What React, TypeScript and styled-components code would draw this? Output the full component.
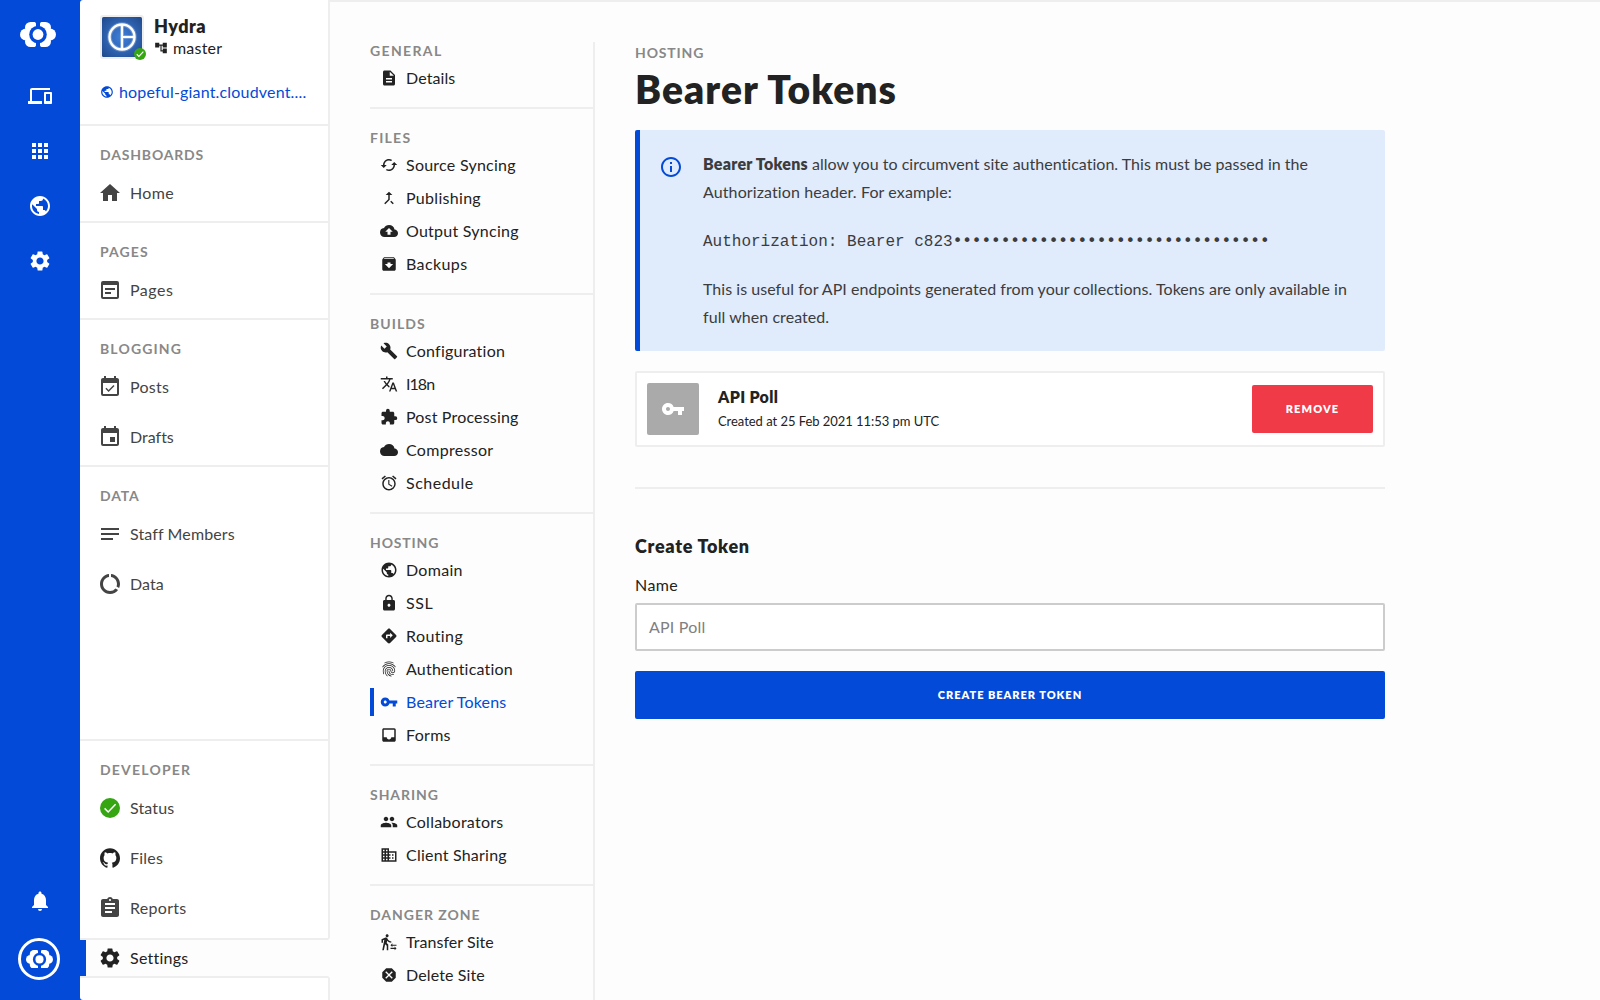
import React from "react";
import styled, { createGlobalStyle } from "styled-components";
import {
  MdDevices, MdApps, MdPublic, MdSettings, MdNotifications, MdHome, MdEventAvailable, MdEvent, MdNotes,
  MdDataUsage, MdAssignment, MdWysiwyg, MdDescription, MdCached, MdCallMerge, MdCloudUpload, MdArchive,
  MdBuild, MdTranslate, MdExtension, MdCloud, MdAccessAlarm, MdLock, MdDirections, MdFingerprint, MdVpnKey,
  MdInbox, MdPeople, MdBusiness, MdTransferWithinAStation, MdDangerous, MdAccountTree, MdInfoOutline,
} from "react-icons/md";
import { SiGithub } from "react-icons/si";

const blue = "#034ad8";
const line = "#eeeeee";

const Global = createGlobalStyle`
  * { box-sizing: border-box; }
  body {
    margin: 0;
    background: #fdfdfd;
    color: #222;
    font: 16px/24px Lato, "Open Sans", sans-serif;
    font-variant-ligatures: none;
  }
  svg { display: block; flex: none; }
`;

const Fit = styled.span<{ $s?: number }>`
  letter-spacing: ${(p) => p.$s ?? 0}px;
  white-space: nowrap;
`;

const Shell = styled.div`
  display: flex;
  height: 1000px;
  overflow: hidden;
  background: ${blue};
`;
const Rail = styled.nav`
  width: 80px;
  flex: none;
  color: #fff;
  display: flex;
  flex-direction: column;
  align-items: center;
  padding: 22px 0 20px;
`;
const RailLogo = styled.div`
  margin: 0 4px 21px 0;
`;
const RailItem = styled.div`
  height: 55px;
  display: grid;
  place-items: center;
`;
const RailFoot = styled.div`
  margin-top: auto;
  display: flex;
  flex-direction: column;
  align-items: center;
  gap: 25px;
`;
const Account = styled.div`
  width: 42px;
  height: 42px;
  border: 3px solid #fff;
  border-radius: 50%;
  display: grid;
  place-items: center;
  margin-right: 2px;
`;

const Side = styled.aside`
  width: 250px;
  flex: none;
  background: #fff;
  border-radius: 3px 0 0 3px;
  display: flex;
  flex-direction: column;
  color: #444;
`;
const SideHead = styled.div`
  height: 126px;
  padding: 15px 20px 0;
  border-right: 2px solid ${line};
  border-bottom: 2px solid ${line};
  color: #222;
`;
const SiteRow = styled.div`
  display: flex;
  gap: 10px;
`;
const Avatar = styled.div`
  position: relative;
  width: 44px;
  height: 44px;
  padding: 2px;
  background: #eee;
  border-radius: 3px;
`;
const AvatarBadge = styled.div`
  position: absolute;
  right: -2px;
  bottom: -1px;
`;
const SiteName = styled.div`
  font-size: 18px;
  font-weight: 800;
  line-height: 22px;
`;
const Branch = styled.div`
  display: flex;
  align-items: center;
  gap: 5px;
  line-height: 22px;
`;
const SiteLink = styled.div`
  display: flex;
  align-items: center;
  gap: 5px;
  margin-top: 21px;
  color: ${blue};
`;
const SideGroup = styled.section<{ $fill?: boolean }>`
  border-right: 2px solid ${line};
  border-bottom: 2px solid ${line};
  padding: 17px 20px 3px;
  flex: ${(p) => (p.$fill ? "1" : "none")};
`;
const DevGroup = styled(SideGroup)`
  padding-bottom: 5px;
  border-bottom-right-radius: 3px;
`;
const Heading = styled.div`
  font-size: 14px;
  font-weight: 700;
  line-height: 24px;
  color: #888;
`;
const SideItem = styled.div`
  display: flex;
  align-items: center;
  gap: 10px;
  height: 50px;
`;
const SideItems = styled.div`
  margin: 1px 0 0;
`;
const SideActive = styled.div`
  height: 36px;
  flex: none;
  background: #fdfdfd;
  border-left: 6px solid ${blue};
  padding-left: 14px;
  display: flex;
  align-items: center;
  gap: 10px;
  color: #222;
`;
const SideTail = styled.div`
  height: 24px;
  flex: none;
  border: 2px solid ${line};
  border-left: 0;
  border-bottom: 0;
  border-top-right-radius: 3px;
`;

const Page = styled.main`
  flex: 1;
  background: #fdfdfd;
  border-top: 2px solid ${line};
  display: flex;
  padding: 40px 0 0 40px;
`;
const Sub = styled.nav`
  width: 225px;
  flex: none;
  border-right: 2px solid ${line};
`;
const SubGroup = styled.section`
  border-bottom: 2px solid ${line};
  padding-bottom: 15px;
  margin-bottom: 20px;
`;
const SubHeading = styled(Heading)`
  line-height: 18px;
`;
const SubItem = styled.div<{ $on?: boolean }>`
  display: flex;
  align-items: center;
  gap: 8px;
  height: 28px;
  padding-left: ${(p) => (p.$on ? 6 : 10)}px;
  border-left: ${(p) => (p.$on ? `4px solid ${blue}` : "0")};
  color: ${(p) => (p.$on ? blue : "#222")};
`;

const SubItems = styled.div`
  display: flex;
  flex-direction: column;
  gap: 5px;
  margin-top: 4px;
`;

const Content = styled.div`
  width: 750px;
  margin-left: 40px;
`;
const Crumb = styled(Heading)`
  line-height: 22px;
`;
const Title = styled.h1`
  margin: 0;
  font-size: 39px;
  font-weight: 800;
  line-height: 51px;
`;
const Notice = styled.div`
  display: flex;
  gap: 20px;
  height: 221px;
  margin-top: 15px;
  padding: 20px 20px 0 19px;
  border-left: 5px solid ${blue};
  border-radius: 2px;
  background: #e0ebfc;
  color: #3c3c3c;
  line-height: 28px;
  & > svg { margin-top: 5px; color: ${blue}; }
`;
const Para = styled.p`
  margin: 0 0 21px;
  b { font-weight: 800; }
`;
const Code = styled.p`
  margin: 22px 0 19px;
  font: 16px/28px "Liberation Mono", monospace;
  white-space: nowrap;
`;
const Mask = styled.span`
  font-family: "DejaVu Sans Mono", monospace;
  letter-spacing: -0.03px;
  line-height: 1;
`;
const Card = styled.div`
  display: flex;
  align-items: center;
  height: 76px;
  margin-top: 20px;
  padding: 0 10px;
  border: 2px solid ${line};
  border-radius: 2px;
  background: #fff;
`;
const KeyTile = styled.div`
  width: 52px;
  height: 52px;
  border-radius: 2px;
  background: #aaa;
  color: #fff;
  display: grid;
  place-items: center;
`;
const CardText = styled.div`
  margin: 0 0 1px 19px;
  flex: 1;
`;
const CardName = styled.div`
  font-weight: 800;
  line-height: 24px;
`;
const CardMeta = styled.div`
  font-size: 13px;
  line-height: 24px;
`;
const Button = styled.button<{ $danger?: boolean }>`
  width: ${(p) => (p.$danger ? "121px" : "100%")};
  height: 48px;
  border: 0;
  border-radius: 2px;
  background: ${(p) => (p.$danger ? "#f03a47" : blue)};
  color: #fff;
  font: 800 11px/24px Lato, sans-serif;
  padding: 0;
`;
const Rule = styled.hr`
  height: 2px;
  margin: 40px 0 43px;
  border: 0;
  background: ${line};
`;
const FormTitle = styled.h2`
  margin: 0;
  font-size: 18px;
  font-weight: 800;
  line-height: 28px;
`;
const Label = styled.label`
  display: block;
  margin-top: 12px;
  line-height: 26px;
`;
const Input = styled.div`
  height: 48px;
  margin: 5px 0 20px;
  padding: 0 12px;
  border: 2px solid #ccc;
  border-radius: 2px;
  background: #fff;
  color: #808080;
  line-height: 43px;
`;

const Logo = ({ w }: { w: number }) => (
  <svg width={w} height={(w * 25) / 36} viewBox="0 0 36 25">
    <g fill="#fff">
      <circle cx="10.5" cy="5.5" r="5.5" /><circle cx="6" cy="12.5" r="6" /><circle cx="10.5" cy="19.5" r="5.5" />
      <circle cx="25.5" cy="5.5" r="5.5" /><circle cx="30" cy="12.5" r="6" /><circle cx="25.5" cy="19.5" r="5.5" />
      <rect x="8" y="5" width="20" height="15" />
      <path d="M10.5 0H14.6Q15.6 .2 16 1.4V23.6Q15.6 24.8 14.6 25H10.5zM25.5 0H21.4Q20.4 .2 20 1.4V23.6Q20.4 24.8 21.4 25H25.5z" />
    </g>
    <circle cx="18" cy="12.5" r="8.8" fill={blue} />
    <path d="M16.2 0h3.6v25h-3.6z" fill={blue} />
    <circle cx="18" cy="12.5" r="5.4" fill="#fff" />
  </svg>
);

const Check = ({ size }: { size: number }) => (
  <svg width={size} height={size} viewBox="0 0 20 20">
    <circle cx="10" cy="10" r="10" fill="#35a512" />
    <path
      d="M4.6 10.4l3.6 3.6L15.6 6.2"
      fill="none"
      stroke="#fff"
      strokeWidth={size < 16 ? 1.9 : 1.5}
    />
  </svg>
);

const SiteIcon = () => (
  <svg width="40" height="40" viewBox="0 0 40 40">
    <defs>
      <radialGradient id="site" r="0.7">
        <stop offset="0" stopColor="#3f80dc" />
        <stop offset="1" stopColor="#20488a" />
      </radialGradient>
    </defs>
    <rect width="40" height="40" rx="1.5" fill="url(#site)" />
    <g fill="none" stroke="#fff">
      <path d="M20 7.5v25M20 20h12.5" strokeWidth="4" opacity="0.25" />
      <circle cx="20" cy="20" r="12.5" strokeWidth="4.5" opacity="0.25" />
      <circle cx="20" cy="20" r="12.5" strokeWidth="2.4" />
      <path d="M20 7.5v25M20 20h12.5" strokeWidth="2.2" />
    </g>
  </svg>
);

type Item = [React.ReactNode, string, number];
const side: [string, number, Item[]][] = [
  ["DASHBOARDS", 0.83, [[<MdHome />, "Home", 0.35]]],
  ["PAGES", 1.1, [[<MdWysiwyg />, "Pages", 0.5]]],
  ["BLOGGING", 1.15, [[<MdEventAvailable />, "Posts", 0.3], [<MdEvent />, "Drafts", 0]]],
  ["DATA", 0.8, [[<MdNotes />, "Staff Members", 0.12], [<MdDataUsage />, "Data", 0.1]]],
];
const sub: [string, number, Item[]][] = [
  ["GENERAL", 1.35, [[<MdDescription />, "Details", 0.1]]],
  ["FILES", 1.25, [[<MdCached />, "Source Syncing", 0.25], [<MdCallMerge />, "Publishing", 0.3], [<MdCloudUpload />, "Output Syncing", 0.25], [<MdArchive />, "Backups", 0.4]]],
  ["BUILDS", 1.05, [[<MdBuild />, "Configuration", 0.22], [<MdTranslate />, "I18n", -0.95]
    , [<MdExtension />, "Post Processing", 0.17], [<MdCloud />, "Compressor", 0.3], [<MdAccessAlarm />, "Schedule", 0.5]]],
  ["HOSTING", 0.85, [[<MdPublic />, "Domain", 0.3], [<MdLock />, "SSL", 0.6], [<MdDirections />, "Routing", 0.4], [<MdFingerprint />, "Authentication", 0.2], [<MdVpnKey />, "Bearer Tokens", 0.17], [<MdInbox />, "Forms", 0.3]]],
  ["SHARING", 0.95, [[<MdPeople />, "Collaborators", 0.25], [<MdBusiness />, "Client Sharing", 0.22]]],
  ["DANGER ZONE", 0.97, [[<MdTransferWithinAStation />, "Transfer Site", 0.05], [<MdDangerous />, "Delete Site", 0.12]]],
];
const IconBox = styled.span<{ $w: number }>`
  width: ${(p) => p.$w}px;
  display: flex;
  justify-content: center;
  flex: none;
  font-size: ${(p) => (p.$w === 20 ? 24 : 18)}px;
`;

export default function App() {
  return (
    <>
      <Global />
      <Shell>
        <Rail>
          <RailLogo><Logo w={36} /></RailLogo>
          {[MdDevices, MdApps, MdPublic, MdSettings].map((I, i) => (
            <RailItem key={i}><I size={24} /></RailItem>
          ))}
          <RailFoot>
            <MdNotifications size={24} />
            <Account><Logo w={27} /></Account>
          </RailFoot>
        </Rail>
        <Side>
          <SideHead>
            <SiteRow>
              <Avatar><SiteIcon /><AvatarBadge><Check size={12} /></AvatarBadge></Avatar>
              <div>
                <SiteName><Fit $s={0.5}>Hydra</Fit></SiteName>
                <Branch><MdAccountTree size={14} /><Fit $s={0.2}>master</Fit></Branch>
              </div>
            </SiteRow>
            <SiteLink><MdPublic size={14} /><Fit $s={0.18}>hopeful-giant.cloudvent....</Fit></SiteLink>
          </SideHead>
          {side.map(([h, s, items], i) => (
            <SideGroup key={h} $fill={i === 3}>
              <Heading><Fit $s={s}>{h}</Fit></Heading>
              <SideItems>
                {items.map(([icon, t, ls]) => (
                  <SideItem key={t}><IconBox $w={20}>{icon}</IconBox><Fit $s={ls}>{t}</Fit></SideItem>
                ))}
              </SideItems>
            </SideGroup>
          ))}
          <DevGroup>
            <Heading><Fit $s={1.2}>DEVELOPER</Fit></Heading>
            <SideItems>
              <SideItem><Check size={20} /><Fit $s={0.15}>Status</Fit></SideItem>
              <SideItem><SiGithub size={20} color="#222" /><Fit $s={0.2}>Files</Fit></SideItem>
              <SideItem><IconBox $w={20}><MdAssignment /></IconBox><Fit $s={0.3}>Reports</Fit></SideItem>
            </SideItems>
          </DevGroup>
          <SideActive><IconBox $w={20}><MdSettings /></IconBox><Fit $s={0.25}>Settings</Fit></SideActive>
          <SideTail />
        </Side>
        <Page>
          <Sub>
            {sub.map(([h, s, items]) => (
              <SubGroup key={h}>
                <SubHeading><Fit $s={s}>{h}</Fit></SubHeading>
                <SubItems>
                  {items.map(([icon, t, ls]) => (
                    <SubItem key={t} $on={t === "Bearer Tokens"}><IconBox $w={18}>{icon}</IconBox><Fit $s={ls}>{t}</Fit></SubItem>
                  ))}
                </SubItems>
              </SubGroup>
            ))}
          </Sub>
          <Content>
            <Crumb><Fit $s={0.85}>HOSTING</Fit></Crumb>
            <Title><Fit $s={1.1}>Bearer Tokens</Fit></Title>
            <Notice>
              <MdInfoOutline size={24} />
              <div>
                <Para>
                  <Fit $s={0.25}><b>Bearer Tokens</b></Fit><Fit $s={0.02}> allow you to circumvent site authentication. This must be passed in the</Fit><br />
                  <Fit $s={0.11}>Authorization header. For example:</Fit>
                </Para>
                <Code>Authorization: Bearer c823<Mask>{"•".repeat(33)}</Mask></Code>
                <Para>
                  <Fit $s={0.04}>This is useful for API endpoints generated from your collections. Tokens are only available in</Fit><br />
                  <Fit $s={0.06}>full when created.</Fit>
                </Para>
              </div>
            </Notice>
            <Card>
              <KeyTile><MdVpnKey size={24} /></KeyTile>
              <CardText>
                <CardName><Fit $s={0.3}>API Poll</Fit></CardName>
                <CardMeta><Fit $s={-0.04}>Created at 25 Feb 2021 11:53 pm UTC</Fit></CardMeta>
              </CardText>
              <Button $danger><Fit $s={1.1}>REMOVE</Fit></Button>
            </Card>
            <Rule />
            <FormTitle><Fit $s={0.7}>Create Token</Fit></FormTitle>
            <Label><Fit $s={0.4}>Name</Fit></Label>
            <Input><Fit $s={0.2}>API Poll</Fit></Input>
            <Button><Fit $s={0.97}>CREATE BEARER TOKEN</Fit></Button>
          </Content>
        </Page>
      </Shell>
    </>
  );
}
